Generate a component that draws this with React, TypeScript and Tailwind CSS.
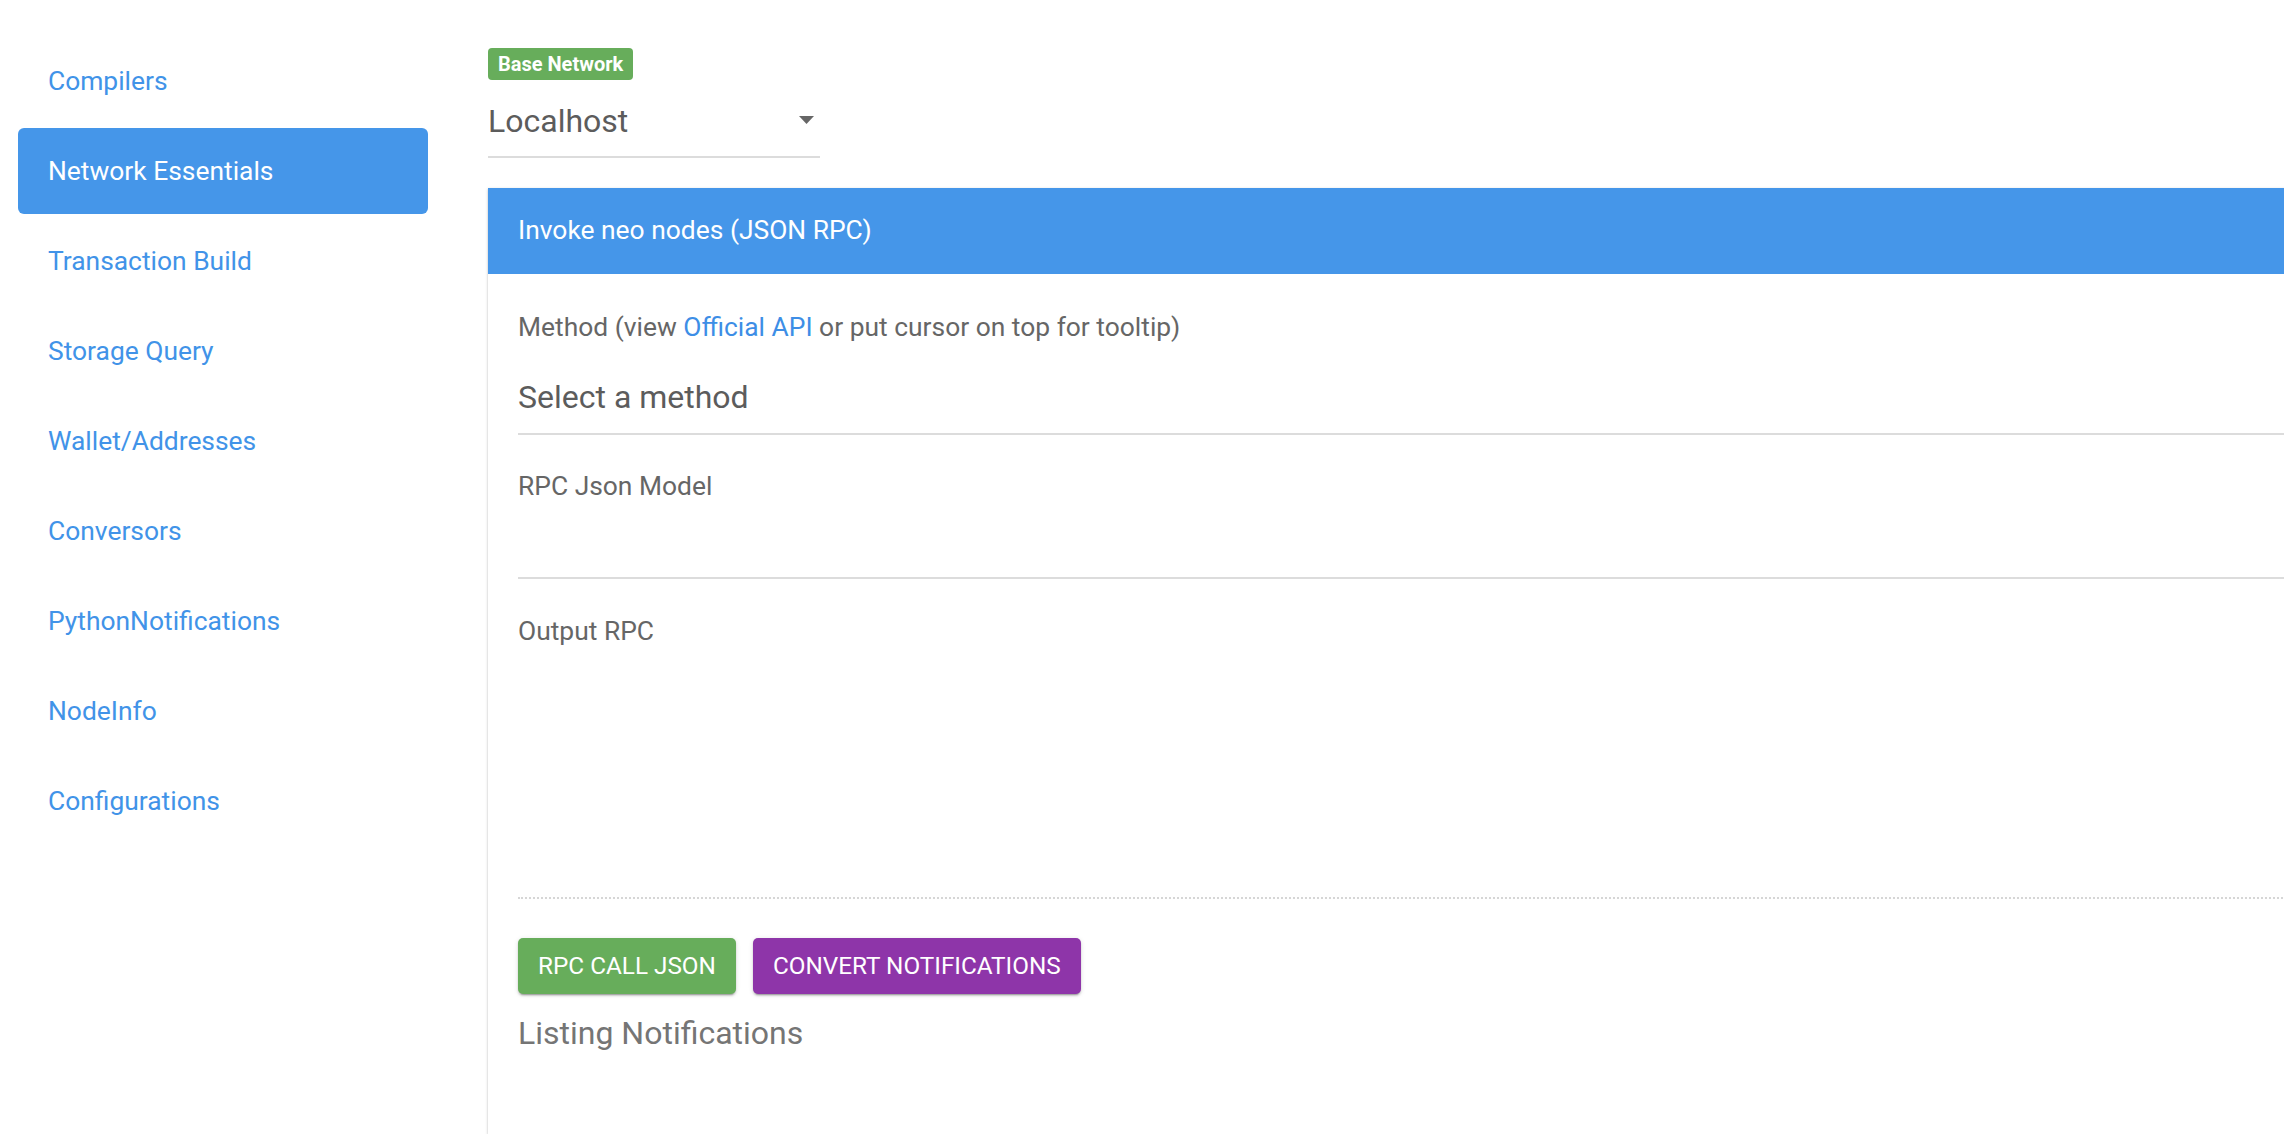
import React from 'react';

const menuItems = [
  'Compilers',
  'Network Essentials',
  'Transaction Build',
  'Storage Query',
  'Wallet/Addresses',
  'Conversors',
  'PythonNotifications',
  'NodeInfo',
  'Configurations',
];

function Sidebar({ active }: { active: string }) {
  return (
    <div className="w-[488px] shrink-0 pl-[18px] pt-[38px]">
      <ul className="flex w-[410px] flex-col gap-[4px]">
        {menuItems.map((item) => (
          <li
            key={item}
            className={
              item === active
                ? 'flex h-[86px] items-center rounded-[6px] bg-[#4596e9] px-[30px] pt-[2px] text-[26.4px] text-white'
                : 'flex h-[86px] items-center px-[30px] pt-[2px] text-[26.4px] text-[#4193e8]'
            }
          >
            {item}
          </li>
        ))}
      </ul>
    </div>
  );
}

const buttonShadow =
  'shadow-[0_3px_1px_-2px_rgba(0,0,0,0.2),0_2px_2px_0_rgba(0,0,0,0.14),0_1px_5px_0_rgba(0,0,0,0.12)]';

export default function App() {
  return (
    <div
      className="flex h-[1134px] w-full overflow-hidden bg-white"
      style={{ fontFamily: 'Roboto, "Liberation Sans", sans-serif' }}
    >
      <Sidebar active="Network Essentials" />

      <div className="flex min-w-0 flex-1 flex-col pt-[48px]">
        {/* network selector */}
        <div>
          <span className="inline-flex h-[32px] items-center rounded-[4px] bg-[#67ad5b] px-[10px] text-[20px] font-bold text-white">
            Base Network
          </span>
        </div>
        <div className="flex h-[78px] w-[332px] items-center justify-between border-b-2 border-[#dcdcdc] pr-[6px] pt-[5px]">
          <span className="text-[32px] text-[#5c5c5c]">Localhost</span>
          <svg width="15" height="8" viewBox="0 0 15 8" className="-mt-[2px]">
            <polygon points="0,0 15,0 7.5,8" fill="#666" />
          </svg>
        </div>

        {/* RPC card */}
        <div className="mt-[30px] w-[1900px] flex-1 bg-white shadow-[0_1px_3px_rgba(0,0,0,0.2),0_1px_1px_rgba(0,0,0,0.14),0_2px_1px_-1px_rgba(0,0,0,0.12)]">
          <div className="flex h-[86px] items-center bg-[#4596e9] px-[30px] text-[26.4px] text-white">
            Invoke neo nodes (JSON RPC)
          </div>

          <div className="px-[30px] pt-[38px]">
            <div className="text-[26.4px] leading-[30px] text-[#666]">
              Method (view <a className="text-[#3d8ee6]">Official API</a> or put cursor on top for
              tooltip)
            </div>
            <div className="border-b-2 border-[#dcdcdc] pb-[16px] pt-[35px] text-[32px] leading-[40px] text-[#5c5c5c]">
              Select a method
            </div>

            <div className="mt-[36px] text-[26.4px] leading-[30px] text-[#666]">RPC Json Model</div>
            <div className="h-[78px] border-b-2 border-[#dcdcdc]" />

            <div className="mt-[37px] text-[26.4px] leading-[30px] text-[#666]">Output RPC</div>
            <div className="h-[253px] border-b-2 border-dotted border-[#d6d6d6]" />

            <div className="mt-[39px] flex gap-[17px]">
              <button
                type="button"
                className={`h-[56px] rounded-[5px] bg-[#67ad5b] px-[20px] text-[24.3px] text-white ${buttonShadow}`}
              >
                RPC CALL JSON
              </button>
              <button
                type="button"
                className={`h-[56px] rounded-[5px] bg-[#8e35a9] px-[20px] text-[24.3px] text-white ${buttonShadow}`}
              >
                CONVERT NOTIFICATIONS
              </button>
            </div>

            <div className="mt-[19px] text-[32px] leading-[40px] text-[#757575]">Listing Notifications</div>
          </div>
        </div>
      </div>
    </div>
  );
}
